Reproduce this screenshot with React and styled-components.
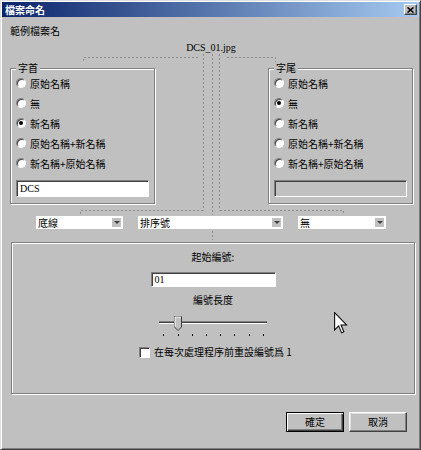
import React from 'react';
import styled, { createGlobalStyle } from 'styled-components';

const CJK = `"Noto Sans CJK TC", "Liberation Sans", sans-serif`;
const SERIF = `"Liberation Serif", "Noto Sans CJK TC", serif`;

const GlobalStyle = createGlobalStyle`
  html, body {
    margin: 0;
    padding: 0;
    background: #c0c0c0;
  }
`;

const Window = styled.div`
  position: relative;
  width: 421px;
  height: 450px;
  box-sizing: border-box;
  background: #c0c0c0;
  border: 1px solid;
  border-color: #dfdfdf #404040 #404040 #dfdfdf;
  box-shadow: inset 1px 1px #fff, inset -1px -1px #808080;
  padding: 1px;
  display: flex;
  flex-direction: column;
  font-family: ${CJK};
  font-size: 10px;
  color: #000;
  overflow: hidden;
`;

const TitleBar = styled.div`
  height: 15px;
  display: flex;
  align-items: center;
  justify-content: space-between;
  padding: 0 2px 0 3px;
  background: linear-gradient(to right, #0a246a, #a6caf0);
`;

const Title = styled.span`
  color: #fff;
  font-weight: bold;
  font-size: 10px;
  line-height: 14px;
`;

const CloseButton = styled.div`
  width: 13px;
  height: 11px;
  box-sizing: border-box;
  background: #c0c0c0;
  border: 1px solid;
  border-color: #fff #404040 #404040 #fff;
  box-shadow: inset -1px -1px #808080;
  display: flex;
  align-items: center;
  justify-content: center;
`;

const Body = styled.div`
  flex: 1;
  display: flex;
  flex-direction: column;
  padding: 0 4px 0 8px;
`;

const SampleLabel = styled.div`
  margin-top: 8px;
  line-height: 12px;
`;

const FileName = styled.div`
  margin-top: 5px;
  line-height: 12px;
  text-align: center;
  padding-right: 3px;
  font-family: ${SERIF};
  font-size: 10px;
`;

const BoxesRow = styled.div`
  margin-top: 14px;
  margin-right: 2px;
  display: grid;
  grid-template-columns: 145px 1fr 145px;
`;

const GroupBox = styled.div`
  position: relative;
  height: 136px;
  box-sizing: border-box;
  border: 1px solid #808080;
  box-shadow: inset 1px 1px #fff, 1px 1px #fff;
  padding: 4px 5px 0 5px;
  grid-column: ${(p) => p.$col};
`;

const Legend = styled.span`
  position: absolute;
  top: -7px;
  left: 5px;
  padding: 0 2px;
  background: #c0c0c0;
  line-height: 12px;
`;

const RadioRow = styled.div`
  height: 20px;
  display: flex;
  align-items: center;
  gap: 4px;
  white-space: nowrap;
`;

const Radio = styled.span`
  position: relative;
  width: 10px;
  height: 10px;
  box-sizing: border-box;
  border-radius: 50%;
  border: 1px solid;
  border-color: #808080 #fff #fff #808080;
  box-shadow: inset 1px 1px #404040;
  background: #fff;
  flex: none;

  &::after {
    content: '';
    display: ${(p) => (p.$checked ? 'block' : 'none')};
    position: absolute;
    left: 2px;
    top: 2px;
    width: 4px;
    height: 4px;
    border-radius: 50%;
    background: #000;
  }
`;

const TextBox = styled.div`
  margin-top: ${(p) => p.$mt || 0}px;
  width: ${(p) => (p.$w ? `${p.$w}px` : 'auto')};
  height: ${(p) => p.$h || 17}px;
  box-sizing: border-box;
  border: 1px solid;
  border-color: #808080 #fff #fff #808080;
  box-shadow: inset 1px 1px #404040;
  background: ${(p) => (p.$disabled ? '#c0c0c0' : '#fff')};
  padding-left: 3px;
  font-family: ${SERIF};
  font-size: 10px;
  line-height: ${(p) => (p.$h || 17) - 2}px;
`;

const DropRow = styled.div`
  margin-top: 12px;
  display: flex;
  gap: 15px;
  padding-left: 26px;
`;

const Select = styled.div`
  width: ${(p) => p.$w}px;
  height: 13px;
  box-sizing: border-box;
  background: #fff;
  display: flex;
  align-items: center;
  justify-content: space-between;
  padding: 0 2px 0 2px;
  line-height: 13px;
`;

const SelectArrow = styled.span`
  width: 9px;
  height: 9px;
  background: #c0c0c0;
  display: flex;
  align-items: center;
  justify-content: center;

  &::after {
    content: '';
    border-left: 3px solid transparent;
    border-right: 3px solid transparent;
    border-top: 3px solid #404040;
  }
`;

const Panel = styled.div`
  margin-top: 13px;
  margin-left: 1px;
  height: 152px;
  box-sizing: border-box;
  border: 1px solid #808080;
  box-shadow: inset 1px 1px #fff, 1px 1px #fff;
  display: flex;
  flex-direction: column;
  align-items: center;
  padding-top: 8px;
`;

const PanelLabel = styled.div`
  margin-top: ${(p) => p.$mt || 0}px;
  line-height: 12px;
`;

const SliderBox = styled.svg`
  margin-top: 8px;
  display: block;
`;

const CheckRow = styled.label`
  margin-top: 8px;
  align-self: flex-start;
  margin-left: 127px;
  display: flex;
  align-items: center;
  gap: 4px;
  line-height: 12px;
`;

const CheckBox = styled.span`
  width: 11px;
  height: 11px;
  box-sizing: border-box;
  border: 1px solid;
  border-color: #808080 #fff #fff #808080;
  box-shadow: inset 1px 1px #404040;
  background: #fff;
`;

const ButtonRow = styled.div`
  margin-top: 18px;
  display: flex;
  justify-content: flex-end;
  gap: 5px;
  padding-right: 8px;
`;

const Button = styled.div`
  width: 58px;
  height: 20px;
  box-sizing: border-box;
  background: #c0c0c0;
  border: 1px solid;
  border-color: ${(p) => (p.$default ? '#000' : '#fff #404040 #404040 #fff')};
  box-shadow: ${(p) =>
    p.$default
      ? 'inset 1px 1px #fff, inset -1px -1px #404040, inset -2px -2px #808080'
      : 'inset -1px -1px #808080, inset 1px 1px #dfdfdf'};
  display: flex;
  align-items: center;
  justify-content: center;
  line-height: 12px;
`;

const Overlay = styled.svg`
  position: absolute;
  left: -1px;
  top: -1px;
  pointer-events: none;
`;

const Cursor = styled.svg`
  position: absolute;
  left: 333px;
  top: 311px;
  pointer-events: none;
`;

const prefixOptions = ['原始名稱', '無', '新名稱', '原始名稱+新名稱', '新名稱+原始名稱'];

function OptionGroup({ col, legend, checked, value, disabled }) {
  return (
    <GroupBox $col={col}>
      <Legend>{legend}</Legend>
      {prefixOptions.map((label, i) => (
        <RadioRow key={label}>
          <Radio $checked={i === checked} />
          {label}
        </RadioRow>
      ))}
      <TextBox $mt={7} $disabled={disabled}>{value}</TextBox>
    </GroupBox>
  );
}

function Slider() {
  const ticks = [6, 21, 35, 49, 63, 77, 92, 106];
  return (
    <SliderBox width="112" height="24" viewBox="0 0 112 24">
      <line x1="2" y1="7.5" x2="110" y2="7.5" stroke="#808080" />
      <line x1="2" y1="8.5" x2="110" y2="8.5" stroke="#404040" />
      <line x1="2" y1="9.5" x2="110" y2="9.5" stroke="#fff" />
      <path d="M17.5 2.5 H24.5 V13 L21 16.5 L17.5 13 Z" fill="#c0c0c0" stroke="#404040" />
      <path d="M18 3 V12.8 M18 3 H24" stroke="#fff" fill="none" />
      {ticks.map((x) => (
        <line key={x} x1={x + 0.5} y1="20" x2={x + 0.5} y2="22" stroke="#000" />
      ))}
    </SliderBox>
  );
}

export default function App() {
  return (
    <>
      <GlobalStyle />
      <Window>
        <TitleBar>
          <Title>檔案命名</Title>
          <CloseButton>
            <svg width="7" height="6" viewBox="0 0 7 6">
              <path d="M0.5 0.5 L6.5 5.5 M6.5 0.5 L0.5 5.5" stroke="#000" strokeWidth="1.6" />
            </svg>
          </CloseButton>
        </TitleBar>
        <Body>
          <SampleLabel>範例檔案名</SampleLabel>
          <FileName>DCS_01.jpg</FileName>
          <BoxesRow>
            <OptionGroup col={1} legend="字首" checked={2} value="DCS" />
            <OptionGroup col={3} legend="字尾" checked={1} value="" disabled />
          </BoxesRow>
          <DropRow>
            <Select $w={87}>底線<SelectArrow /></Select>
            <Select $w={145}>排序號<SelectArrow /></Select>
            <Select $w={88}>無<SelectArrow /></Select>
          </DropRow>
          <Panel>
            <PanelLabel>起始編號:</PanelLabel>
            <TextBox $mt={9} $w={125} $h={15}>01</TextBox>
            <PanelLabel $mt={7}>編號長度</PanelLabel>
            <Slider />
            <CheckRow>
              <CheckBox />
              在每次處理程序前重設編號爲 1
            </CheckRow>
          </Panel>
          <ButtonRow>
            <Button $default>確定</Button>
            <Button>取消</Button>
          </ButtonRow>
        </Body>
        <Overlay width="421" height="450" viewBox="0 0 421 450">
          <g stroke="#8c8c8c" strokeDasharray="2 2" fill="none">
            <path d="M83.5 61 V57.5 H198" />
            <path d="M227 57.5 H275.5 V62" />
            <path d="M203.5 54 V210.5" />
            <path d="M212.5 54 V215" />
            <path d="M212.5 231 V240" />
            <path d="M219.5 54 V210.5" />
            <path d="M80.5 214 V210.5 H203" />
            <path d="M220 210.5 H343.5 V214" />
          </g>
        </Overlay>
        <Cursor width="14" height="22" viewBox="0 0 12 19">
          <path
            d="M0.5 0.5 V15.5 L4 12 L6.5 18 L8.5 17 L6 11.2 L10.8 11.2 Z"
            fill="#fff"
            stroke="#000"
            strokeWidth="0.9"
          />
        </Cursor>
      </Window>
    </>
  );
}
